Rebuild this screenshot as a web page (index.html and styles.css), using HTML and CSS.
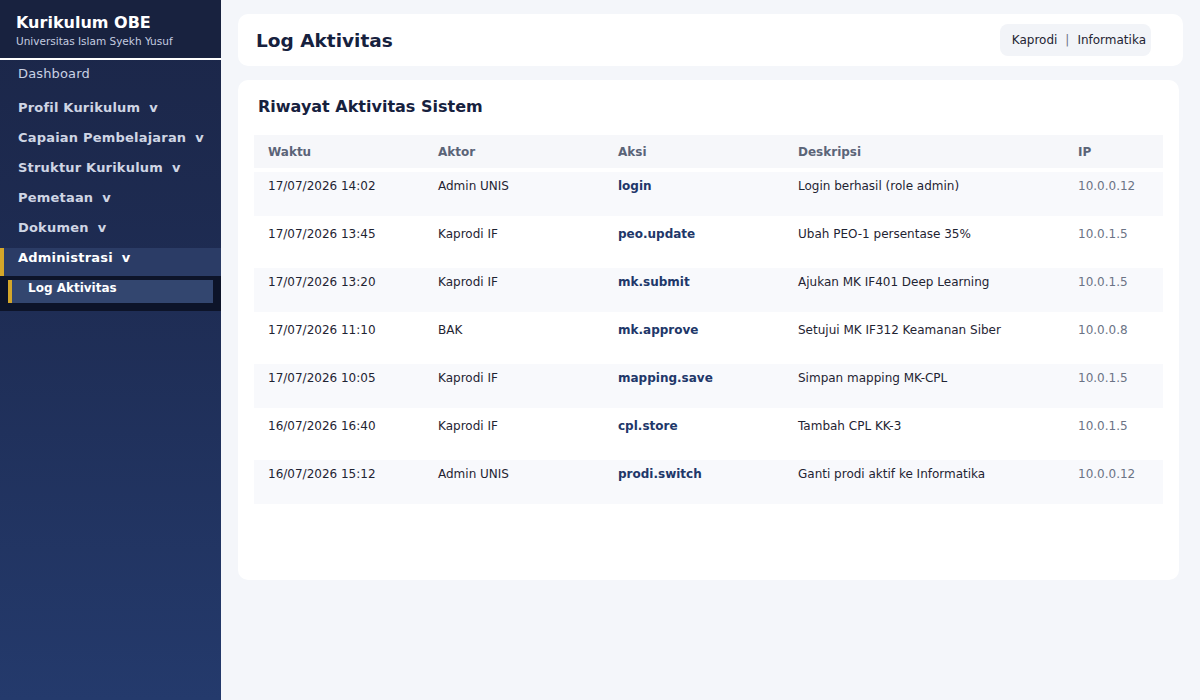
FILE: index.html
```html
<!DOCTYPE html>
<html lang="id">
<head>
<meta charset="utf-8">
<title>Log Aktivitas</title>
<link rel="stylesheet" href="styles.css">
</head>
<body>
<div class="app">
  <aside class="sidebar">
    <div class="brand">
      <div class="brand-title">Kurikulum OBE</div>
      <div class="brand-sub">Universitas Islam Syekh Yusuf</div>
    </div>
    <nav class="nav">
      <div class="nav-link">Dashboard</div>
      <div class="nav-group">Profil Kurikulum<span class="caret">v</span></div>
      <div class="nav-group">Capaian Pembelajaran<span class="caret">v</span></div>
      <div class="nav-group">Struktur Kurikulum<span class="caret">v</span></div>
      <div class="nav-group">Pemetaan<span class="caret">v</span></div>
      <div class="nav-group">Dokumen<span class="caret">v</span></div>
      <div class="nav-group active">Administrasi<span class="caret">v</span></div>
      <div class="submenu">
        <div class="sub-item">Log Aktivitas</div>
      </div>
    </nav>
  </aside>
  <main class="main">
    <header class="topbar">
      <h1 class="page-title">Log Aktivitas</h1>
      <div class="badge">Kaprodi<span class="sep">|</span>Informatika</div>
    </header>
    <section class="card">
      <h2 class="card-title">Riwayat Aktivitas Sistem</h2>
      <table class="log">
        <colgroup>
          <col class="c1"><col class="c2"><col class="c3"><col class="c4"><col class="c5">
        </colgroup>
        <thead>
          <tr><th>Waktu</th><th>Aktor</th><th>Aksi</th><th>Deskripsi</th><th>IP</th></tr>
        </thead>
        <tbody>
          <tr class="odd"><td>17/07/2026 14:02</td><td>Admin UNIS</td><td class="act">login</td><td>Login berhasil (role admin)</td><td class="ip">10.0.0.12</td></tr>
          <tr><td>17/07/2026 13:45</td><td>Kaprodi IF</td><td class="act">peo.update</td><td>Ubah PEO-1 persentase 35%</td><td class="ip">10.0.1.5</td></tr>
          <tr class="odd"><td>17/07/2026 13:20</td><td>Kaprodi IF</td><td class="act">mk.submit</td><td>Ajukan MK IF401 Deep Learning</td><td class="ip">10.0.1.5</td></tr>
          <tr><td>17/07/2026 11:10</td><td>BAK</td><td class="act">mk.approve</td><td>Setujui MK IF312 Keamanan Siber</td><td class="ip">10.0.0.8</td></tr>
          <tr class="odd"><td>17/07/2026 10:05</td><td>Kaprodi IF</td><td class="act">mapping.save</td><td>Simpan mapping MK-CPL</td><td class="ip">10.0.1.5</td></tr>
          <tr><td>16/07/2026 16:40</td><td>Kaprodi IF</td><td class="act">cpl.store</td><td>Tambah CPL KK-3</td><td class="ip">10.0.1.5</td></tr>
          <tr class="odd"><td>16/07/2026 15:12</td><td>Admin UNIS</td><td class="act">prodi.switch</td><td>Ganti prodi aktif ke Informatika</td><td class="ip">10.0.0.12</td></tr>
        </tbody>
      </table>
    </section>
  </main>
</div>
</body>
</html>
```

FILE: styles.css
```css
* { box-sizing: border-box; }
html, body { margin: 0; padding: 0; }
body {
  font-family: "DejaVu Sans", "Noto Sans", sans-serif;
  background: #f4f6fa;
  color: #1f2433;
  width: 1200px;
  height: 700px;
  overflow: hidden;
}
.app { display: flex; height: 700px; }

.sidebar {
  width: 221px;
  flex: none;
  height: 700px;
  background: linear-gradient(180deg, #1b2648 0%, #1e2c53 40%, #243a6c 100%);
  color: #cfd6e6;
}
.brand {
  height: 60px;
  padding: 13px 16px 0;
  background: #18223f;
  border-bottom: 2px solid #ffffff;
}
.brand-title { font-size: 16px; font-weight: bold; color: #ffffff; line-height: 19px; }
.brand-sub { font-size: 10.5px; color: #c5cde0; line-height: 13px; margin-top: 3px; }

.nav { display: flex; flex-direction: column; }
.nav-link {
  padding: 6px 18px;
  font-size: 13px;
  line-height: 16px;
  letter-spacing: 0.15px;
  color: #c9d1e3;
  margin-bottom: 10px;
}
.nav-group {
  padding: 2px 0 10px 18px;
  font-size: 13px;
  line-height: 16px;
  font-weight: bold;
  letter-spacing: 0.2px;
  color: #cfd5e4;
  margin-bottom: 2px;
  white-space: nowrap;
}
.caret { margin-left: 9px; }
.nav-group.active {
  background: #2b3c66;
  color: #ffffff;
  border-left: 4px solid #d4a62a;
  padding-left: 14px;
  margin-bottom: 0;
}
.submenu {
  background: #0d1429;
  padding: 4px 8px 8px;
}
.sub-item {
  background: #33466f;
  border-left: 4px solid #d4a62a;
  padding: 0 16px 7px;
  font-size: 12px;
  line-height: 16px;
  font-weight: bold;
  color: #ffffff;
}

.main {
  flex: 1;
  padding: 14px 17px 0 17px;
  display: flex;
  flex-direction: column;
}
.topbar {
  height: 52px;
  background: #ffffff;
  border-radius: 10px;
  display: flex;
  align-items: center;
  justify-content: space-between;
  padding: 0 32px 0 18px;
}
.page-title {
  margin: 0;
  font-size: 18.5px;
  font-weight: bold;
  color: #16213e;
}
.badge {
  height: 32px;
  display: flex;
  align-items: center;
  background: #f2f4f8;
  border-radius: 8px;
  padding: 0 5px 0 12px;
  font-size: 12px;
  color: #1f2433;
}
.sep { margin: 0 8px; color: #6b7385; }

.card {
  margin-top: 14px;
  margin-right: 4px;
  height: 500px;
  background: #ffffff;
  border-radius: 10px;
  padding: 17px 16px 16px;
}
.card-title {
  margin: 0 0 14px 4px;
  font-size: 16px;
  line-height: 20px;
  font-weight: bold;
  color: #16213e;
}
.log {
  width: 909px;
  border-collapse: separate;
  border-spacing: 0 4px;
  table-layout: fixed;
  font-size: 12px;
}
.c1 { width: 170px; }
.c2 { width: 180px; }
.c3 { width: 180px; }
.c4 { width: 280px; }
.c5 { width: 99px; }
.log th {
  background: #f6f7fa;
  text-align: left;
  font-weight: bold;
  color: #5b6478;
  height: 33px;
  padding: 0 14px;
  line-height: 16px;
}
.log td {
  height: 44px;
  padding: 6px 14px 0;
  line-height: 16px;
  vertical-align: top;
  color: #1f2433;
  white-space: nowrap;
}
.log tr.odd td { background: #f8f9fc; }
.log td.act { font-weight: bold; color: #213769; }
.log td.ip { color: #6b7385; }
```
